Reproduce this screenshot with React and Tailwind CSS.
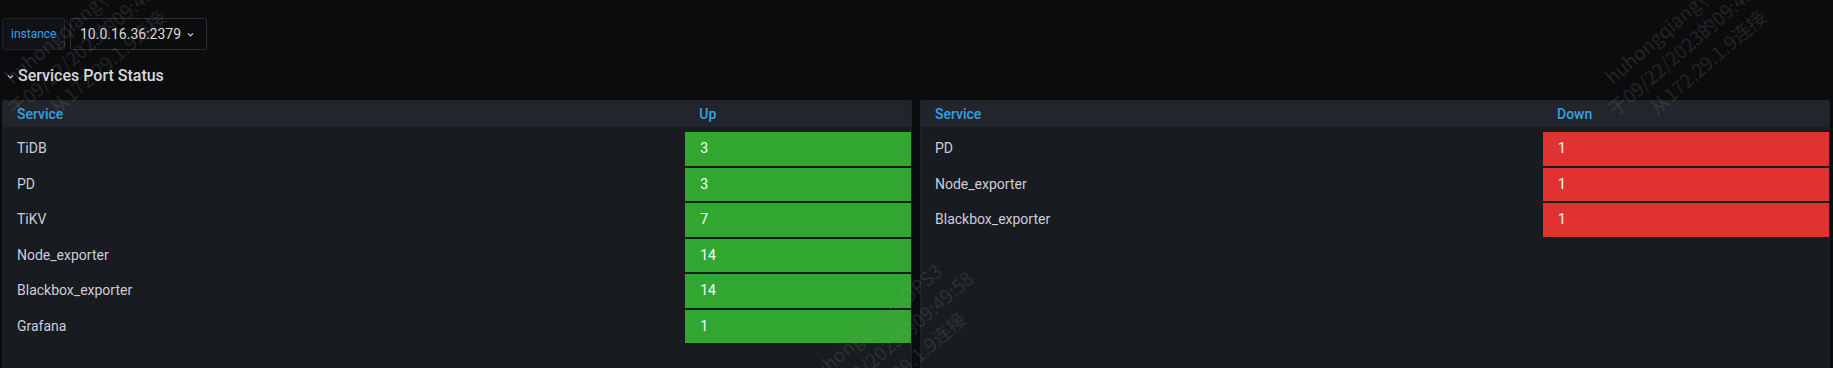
import React from "react";

const upRows = [
  ["TiDB", "3"],
  ["PD", "3"],
  ["TiKV", "7"],
  ["Node_exporter", "14"],
  ["Blackbox_exporter", "14"],
  ["Grafana", "1"],
];
const downRows = [
  ["PD", "1"],
  ["Node_exporter", "1"],
  ["Blackbox_exporter", "1"],
];

function Chevron({ className }) {
  return (
    <svg viewBox="0 0 10 10" className={className} fill="none" stroke="currentColor" strokeWidth="1.4" strokeLinecap="round" strokeLinejoin="round">
      <path d="M2.5 4 L5 6.5 L7.5 4" />
    </svg>
  );
}

function Panel({ title, rows, firstW, secondW, cellClass }) {
  return (
    <div className="flex h-[290px] w-[910px] flex-col rounded-[2px] border border-[#1f2125] bg-[#181b1f]">
      <div className="flex h-[26px] shrink-0 items-center bg-[#22252b] text-[14px] font-medium text-[#33a2e5]">
        <div className="pl-[14px]" style={{ width: firstW }}>Service</div>
        <div className="pl-[14px]" style={{ width: secondW }}>{title}</div>
      </div>
      <div className="mt-[5px] flex flex-col gap-[2px]">
        {rows.map(([name, v]) => (
          <div key={name} className="flex h-[33.5px] items-center text-[14px]">
            <div className="pl-[14px] text-[#ccccdc]" style={{ width: firstW }}>{name}</div>
            <div className={`flex h-full items-center pl-[15px] text-white ${cellClass}`} style={{ width: secondW }}>{v}</div>
          </div>
        ))}
      </div>
    </div>
  );
}

function Watermark({ x, y }) {
  return (
    <div
      className="pointer-events-none absolute flex flex-col items-center text-[19px] leading-[26px] text-[#9a9a9a] opacity-[0.17] whitespace-nowrap"
      style={{ left: x, top: y, transform: "translate(-50%, -50%) rotate(-41deg)", fontFamily: '"Noto Sans CJK SC", "Noto Sans", sans-serif' }}
    >
      <div>huhongqiang\OPS3</div>
      <div>于09/22/2023的09:49:58</div>
      <div>从172.29.1.9连接</div>
    </div>
  );
}

export default function App() {
  return (
    <div className="relative h-[368px] w-[1833px] overflow-hidden bg-[#0b0c0e]" style={{ fontFamily: 'Roboto, "Liberation Sans", sans-serif' }}>
      <div className="flex flex-col pl-[2px] pt-[18px]">
        <div className="flex items-center gap-[5px]">
          <div className="flex h-[32px] w-[63px] items-center rounded-[2px] border border-[#202226] bg-[#111217] pl-[8px] text-[12px] text-[#33a2e5]">
            instance
          </div>
          <div className="flex h-[32px] w-[137px] items-center rounded-[2px] border border-[#2c2f34] pl-[9px] text-[14px] text-[#d8d9da]">
            10.0.16.36:2379
            <Chevron className="ml-[5px] h-[9px] w-[9px] text-[#ccccdc]" />
          </div>
        </div>
        <div className="mt-[17px] flex h-[18px] items-center">
          <Chevron className="ml-[4px] h-[9px] w-[9px] text-[#ccccdc]" />
          <span className="ml-[3px] text-[16px] font-medium text-[#d8d9da]">Services Port Status</span>
        </div>
        <div className="mt-[15px] flex gap-[8px]">
          <Panel title="Up" rows={upRows} firstW={683} secondW={226} cellClass="bg-[#31a630]" />
          <Panel title="Down" rows={downRows} firstW={622} secondW={286} cellClass="bg-[#e03331]" />
        </div>
      </div>
      <Watermark x={90} y={42} />
      <Watermark x={890} y={344} />
      <Watermark x={1690} y={42} />
    </div>
  );
}
